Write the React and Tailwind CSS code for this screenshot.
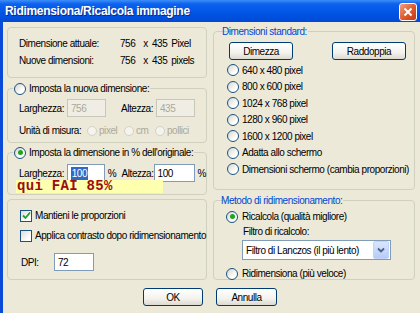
const Radio = ({ checked, disabled }) => (
  <span
    className={`w-[12px] h-[12px] rounded-full border flex items-center justify-center shrink-0 ${
      disabled
        ? 'border-[#d4d2c6] bg-[#f4f3ee]'
        : 'border-[#1c5180] bg-[linear-gradient(135deg,#d6d5ce,#ffffff_70%)]'
    }`}
  >
    {checked && <span className="w-[5px] h-[5px] rounded-full bg-[#1fa51f]" />}
  </span>
)

const Check = ({ checked }) => (
  <span className="w-[12px] h-[12px] border border-[#1c5180] bg-[linear-gradient(135deg,#dcdcd5,#ffffff_75%)] flex items-center justify-center shrink-0">
    {checked && (
      <svg width="9" height="9" viewBox="0 0 9 9">
        <path d="M1 4.5 L3.5 7 L8 1.5" fill="none" stroke="#21a121" strokeWidth="1.8" />
      </svg>
    )}
  </span>
)

const Btn = ({ children, w }) => (
  <div
    className={`${w} h-[18px] rounded-[3px] border border-[#003c74] bg-[linear-gradient(180deg,#ffffff,#f3f2ec_60%,#dcdad0)] flex items-center justify-center text-black`}
  >
    {children}
  </div>
)

const Input = ({ w, value, disabled, selected }) => (
  <div
    className={`${w} h-[18px] border flex items-center px-[3px] shrink-0 ${
      disabled ? 'border-[#c9c7ba] bg-[#f0eee4] text-[#aca899]' : 'border-[#7f9db9] bg-white text-black'
    }`}
  >
    {selected ? <span className="bg-[#316ac5] text-white px-[1px]">{value}</span> : value}
  </div>
)

const Group = ({ legend, blue, className, children }) => (
  <div className={`border border-[#d0d0bf] rounded-[4px] ${className}`}>
    {legend && (
      <div
        className={`-mt-[7px] ml-[5px] h-[13px] w-fit px-[1px] bg-[#ece9d8] flex items-center gap-[3px] ${
          blue ? 'text-[#0046d5] ml-[7px]' : ''
        }`}
      >
        {legend}
      </div>
    )}
    {children}
  </div>
)

const Row = ({ label, checked }) => (
  <div className="h-[13px] flex items-center gap-[3px] mt-[3.5px]">
    <Radio checked={checked} />
    <span>{label}</span>
  </div>
)

const Unit = ({ label, w }) => (
  <div className={`${w} flex items-center gap-[2px] shrink-0`}>
    <span className="w-[10px] h-[10px] rounded-full border border-[#d4d2c6] bg-[#f4f3ee] shrink-0" />
    <span className="text-[#aca899]">{label}</span>
  </div>
)

export default function App() {
  return (
    <div className="w-[420px] h-[313px] overflow-hidden whitespace-nowrap bg-[#ece9d8] font-['Liberation_Sans',Arial,sans-serif] text-[10px] tracking-[-0.45px] leading-[13px] text-black">
      <div className="h-[22px] flex items-center justify-between pl-[5px] pr-[3px] bg-[linear-gradient(180deg,#3d8ff8_0%,#0c61ee_18%,#0056e6_55%,#0049d6_100%)]">
        <span className="text-white font-bold text-[12px] tracking-[-0.3px] [text-shadow:1px_1px_0_#0a2a80]">
          Ridimensiona/Ricalcola immagine
        </span>
        <div className="w-[18px] h-[18px] mt-[2px] rounded-[3px] border border-white bg-[linear-gradient(135deg,#f0a080,#e0582a_55%,#c2391a)] flex items-center justify-center">
          <svg width="10" height="10" viewBox="0 0 10 10">
            <path d="M1.5 1.5 L8.5 8.5 M8.5 1.5 L1.5 8.5" stroke="white" strokeWidth="2" />
          </svg>
        </div>
      </div>

      <div className="h-[291px] border-l-[3px] border-[#0a4ad8] flex flex-col">
        <div className="flex">
          <div className="w-[200px] ml-[4px] flex flex-col">
            <Group className="mt-[5px] h-[51px] pl-[11px] pt-[9px]">
              <div className="flex h-[13px] items-center">
                <span className="w-[101px]">Dimensione attuale:</span>
                <span>756</span>
                <span className="ml-[8px]">x</span>
                <span className="ml-[4px]">435</span>
                <span className="ml-[4px]">Pixel</span>
              </div>
              <div className="flex h-[13px] items-center mt-[4px]">
                <span className="w-[101px]">Nuove dimensioni:</span>
                <span>756</span>
                <span className="ml-[8px]">x</span>
                <span className="ml-[4px]">435</span>
                <span className="ml-[4px]">pixels</span>
              </div>
            </Group>

            <Group
              className="mt-[10px] h-[55px]"
              legend={
                <>
                  <Radio />
                  <span>Imposta la nuova dimensione:</span>
                </>
              }
            >
              <div className="flex items-center mt-[4px] pl-[11px]">
                <span className="w-[48px]">Larghezza:</span>
                <Input w="w-[39px]" value="756" disabled />
                <span className="ml-[15px] w-[35px]">Altezza:</span>
                <Input w="w-[39px]" value="435" disabled />
              </div>
              <div className="flex items-center h-[13px] mt-[7px] pl-[11px]">
                <span className="w-[68px] shrink-0">Unità di misura:</span>
                <Unit label="pixel" w="w-[37px]" />
                <Unit label="cm" w="w-[31px]" />
                <Unit label="pollici" w="w-[40px]" />
              </div>
            </Group>

            <Group
              className="mt-[9px] h-[43px] relative"
              legend={
                <>
                  <Radio checked />
                  <span>Imposta la dimensione in % dell'originale:</span>
                </>
              }
            >
              <div className="flex items-center mt-[5px] pl-[11px]">
                <span className="w-[48px]">Larghezza:</span>
                <Input w="w-[38px]" value="100" selected />
                <span className="ml-[3px] w-[14px]">%</span>
                <span className="w-[32px]">Altezza:</span>
                <Input w="w-[41px]" value="100" />
                <span className="ml-[3px]">%</span>
              </div>
              <div className="absolute left-[8px] top-[27px] w-[147px] h-[13px] bg-[#ffffb0] font-['Liberation_Mono',monospace] font-bold text-[14px] tracking-[0.3px] leading-[13px] text-[#9a0d0d] pl-[1px]">
                qui FAI 85%
              </div>
            </Group>

            <Group className="mt-[4px] h-[81px] pl-[12px]">
              <div className="flex items-center gap-[3px] h-[13px] mt-[9px]">
                <Check checked />
                <span>Mantieni le proporzioni</span>
              </div>
              <div className="flex items-center gap-[3px] h-[13px] mt-[7px]">
                <Check />
                <span>Applica contrasto dopo ridimensionamento</span>
              </div>
              <div className="flex items-center mt-[11px]">
                <span className="w-[34px] pl-[1px]">DPI:</span>
                <Input w="w-[40px]" value="72" />
              </div>
            </Group>
          </div>

          <div className="w-[202px] ml-[6px] flex flex-col">
            <Group className="mt-[9px] h-[159px] pl-[13px]" legend={<span className="-ml-[13px]">Dimensioni standard:</span>} blue>
              <div className="flex items-center mt-[4px] ml-[2px]">
                <Btn w="w-[64px]">Dimezza</Btn>
                <div className="ml-[39px]">
                  <Btn w="w-[74px]">Raddoppia</Btn>
                </div>
              </div>
              <div className="mt-[3px]">
                <Row label="640 x 480 pixel" />
                <Row label="800 x 600 pixel" />
                <Row label="1024 x 768 pixel" />
                <Row label="1280 x 960 pixel" />
                <Row label="1600 x 1200 pixel" />
                <Row label="Adatta allo schermo" />
                <Row label="Dimensioni schermo (cambia proporzioni)" />
              </div>
            </Group>

            <Group className="mt-[10px] h-[80px] pl-[12px]" legend={<span className="-ml-[13px]">Metodo di ridimensionamento:</span>} blue>
              <div className="h-[13px] flex items-center gap-[4px] mt-[3px]">
                <Radio checked />
                <span>Ricalcola (qualità migliore)</span>
              </div>
              <div className="ml-[17px] mt-[2px] h-[13px]">Filtro di ricalcolo:</div>
              <div className="ml-[16px] mt-[2px] w-[149px] h-[20px] border border-[#7f9db9] bg-white flex items-center">
                <span className="flex-1 pl-[3px]">Filtro di Lanczos (il più lento)</span>
                <div className="w-[16px] h-[18px] mr-[1px] rounded-[2px] bg-[linear-gradient(180deg,#dbe6fd,#b6cbf7)] border border-[#c3d3fd] flex items-center justify-center">
                  <svg width="8" height="6" viewBox="0 0 8 6">
                    <path d="M1 1.5 L4 4.5 L7 1.5" fill="none" stroke="#4d6185" strokeWidth="1.8" />
                  </svg>
                </div>
              </div>
              <div className="h-[13px] flex items-center gap-[4px] mt-[7px]">
                <Radio />
                <span>Ridimensiona (più veloce)</span>
              </div>
            </Group>
          </div>
        </div>

        <div className="flex mt-[8px] ml-[140px]">
          <Btn w="w-[60px]">OK</Btn>
          <div className="ml-[13px]">
            <Btn w="w-[61px]">Annulla</Btn>
          </div>
        </div>
      </div>
    </div>
  )
}
